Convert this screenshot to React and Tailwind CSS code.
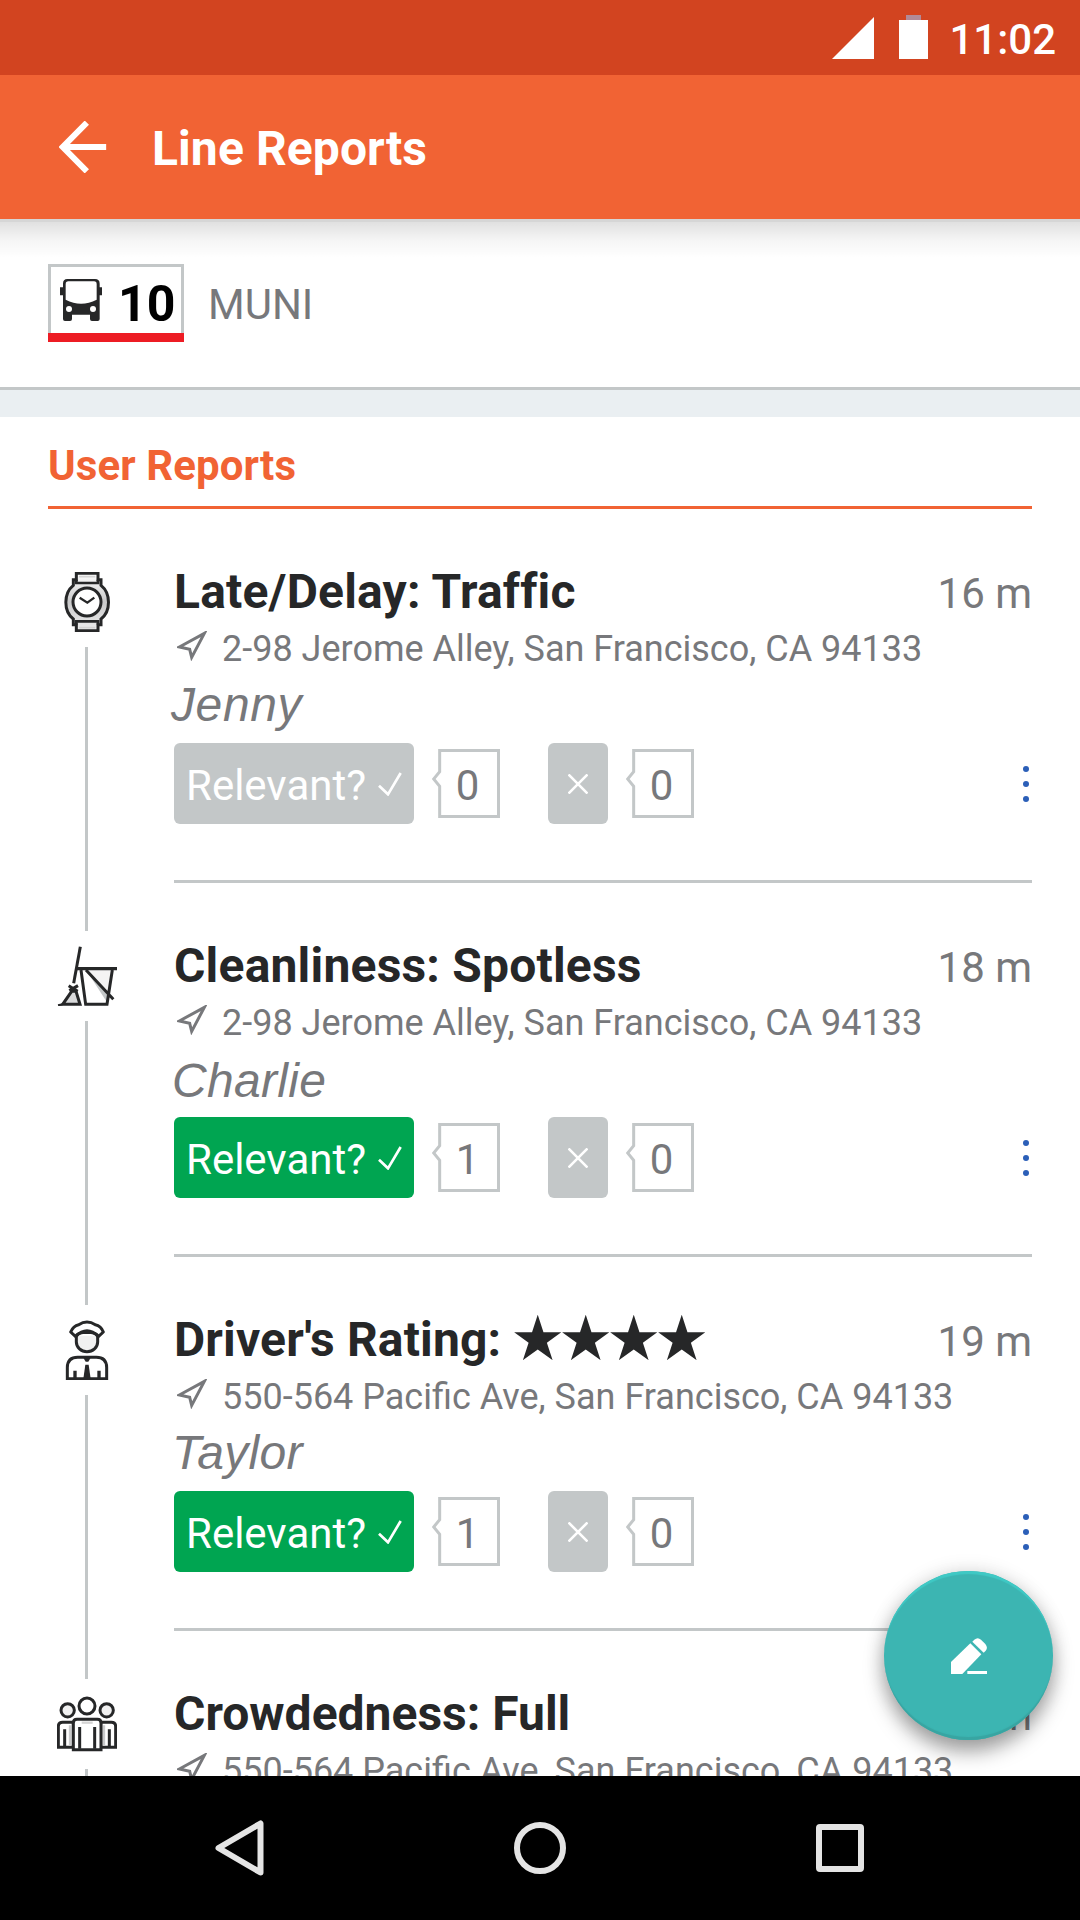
import React from 'react';

const reports = [
  {
    icon: 'watch',
    title: 'Late/Delay: Traffic',
    titleClass: 'tracking-[0.2px]',
    time: '16 m',
    address: '2-98 Jerome Alley, San Francisco, CA 94133',
    user: 'Jenny',
    userClass: '-ml-[3px] tracking-[0.6px]',
    relevant: false,
    up: 0,
    down: 0,
  },
  {
    icon: 'broom',
    title: 'Cleanliness: Spotless',
    titleClass: 'tracking-[0.2px]',
    time: '18 m',
    address: '2-98 Jerome Alley, San Francisco, CA 94133',
    user: 'Charlie',
    userClass: '-ml-0.5 pt-0.5 tracking-[0.3px]',
    relevant: true,
    up: 1,
    down: 0,
  },
  {
    icon: 'driver',
    title: "Driver's Rating:",
    titleClass: 'tracking-[0.15px]',
    stars: '★★★★',
    time: '19 m',
    address: '550-564 Pacific Ave, San Francisco, CA 94133',
    user: 'Taylor',
    userClass: '-ml-0.5 tracking-[0.3px]',
    relevant: true,
    up: 1,
    down: 0,
  },
  {
    icon: 'crowd',
    title: 'Crowdedness: Full',
    titleClass: '',
    time: '21 m',
    address: '550-564 Pacific Ave, San Francisco, CA 94133',
    user: '',
    userClass: '',
    relevant: false,
    up: 0,
    down: 0,
  },
];

const WatchIcon = () => (
  <svg viewBox="81 66 180 180" className="size-[60px]" fill="none" stroke="#262728" strokeWidth="9">
    <defs>
      <linearGradient id="watch" x1="0" y1="0" x2="0" y2="1">
        <stop offset="0" stopColor="#fff" />
        <stop offset="0.5" stopColor="#c9c9ca" />
        <stop offset="1" stopColor="#eee" />
      </linearGradient>
    </defs>
    <path
      d="M139 89V70H204V89H213V106C243 130 243 184 213 207V224H204V242H139V224H130V207C100 184 100 130 130 106V89Z"
      fill="url(#watch)"
    />
    <path d="M139 89V99H204V89M139 224V214H204V224" strokeWidth="8" />
    <path d="M147 80H196M147 233H196" stroke="#d4d4d4" strokeWidth="5" />
    <circle cx="171" cy="156" r="42" fill="#fff" />
    <path d="M149 143L172 158L193 143" strokeWidth="7" />
  </svg>
);

const BroomIcon = () => (
  <svg viewBox="81 78 180 180" className="size-[60px]" fill="none" stroke="#262728" strokeWidth="9">
    <path d="M170 150L245 150L237 228Z" fill="#f4f4f4" stroke="none" />
    <path d="M170 152L237 226L232 248Z" fill="#c3c7c8" stroke="none" />
    <path d="M125 214L98 253H150L138 214Z" fill="#d9dadb" />
    <path d="M151 80L131 190" strokeWidth="9" />
    <path d="M116 197L143 214M144 197L118 212" />
    <path d="M98 253L84 256" strokeWidth="6" />
    <path d="M140 146H261" strokeWidth="10" />
    <path d="M153 150L167 253H231L247 150M168 150L250 238" />
  </svg>
);

const DriverIcon = () => (
  <svg viewBox="81 90 180 180" className="size-[60px]" fill="none" stroke="#262728" strokeWidth="9">
    <path d="M139 137V156A32 29 0 0 0 203 156V137" fill="#f1f1f1" />
    <path
      d="M137 140L122 126Q130 107 146 104Q171 88 196 104Q213 107 220 126L205 140Q171 104 137 140Z"
      fill="#fff"
      strokeLinejoin="round"
    />
    <path d="M138 138Q142 128 171 127Q200 128 204 138" />
    <path d="M112 266V232Q113 202 143 202H199Q229 202 230 232V266Z" fill="#fff" />
    <path d="M160 203H182L175 215H167Z" fill="#262728" stroke="none" />
    <path d="M166 224H176L182 266H160Z" fill="#262728" stroke="none" />
    <path d="M135 242V266M207 242V266" strokeWidth="10" />
  </svg>
);

const CrowdIcon = () => (
  <svg viewBox="81 102 180 180" className="size-[60px]" fill="#fff" stroke="#262728" strokeWidth="9">
    <circle cx="113" cy="151" r="20" fill="#f1f1f1" />
    <circle cx="230" cy="151" r="20" fill="#f1f1f1" />
    <circle cx="171" cy="138" r="24" />
    <path d="M130 187H98Q85 187 85 200V262H130ZM212 187H244Q257 187 257 200V262H212Z" />
    <path d="M120 196V258M222 196V258" stroke="#c9cacb" strokeWidth="7" />
    <path d="M104 208V262M238 208V262" />
    <path d="M130 269V189Q130 178 141 178H202Q213 178 213 189V269Z" />
    <path d="M149 201V266M194 201V266" />
    <path d="M155 188H188" stroke="#d4d4d4" strokeWidth="7" />
  </svg>
);

const BusIcon = () => (
  <svg viewBox="180 216 126 126" className="size-[42px]" fill="#262728">
    <path d="M202 216H285Q299 216 299 230V241H306V265H299V336Q299 342 293 342H276Q270 342 270 336V323H216V336Q216 342 210 342H195Q189 342 189 336V265H180V241H189V230Q189 216 202 216Z" />
    <path d="M205 223H282Q290 223 290 231V278Q243 302 197 278V231Q197 223 205 223Z" fill="#fff" />
    <circle cx="207" cy="306" r="9" fill="#fff" />
    <circle cx="279" cy="306" r="9" fill="#fff" />
  </svg>
);

const icons = {
  watch: WatchIcon,
  broom: BroomIcon,
  driver: DriverIcon,
  crowd: CrowdIcon,
};

const CountBubble = ({ count }) => (
  <div className="relative flex h-[69px] w-[68px] items-center justify-center pt-[5px] pl-[3px] text-[42px] leading-none text-[#77787b]">
    <svg viewBox="96 597 204 207" className="absolute inset-0 size-full" fill="none" stroke="#c3c7c8" strokeWidth="9">
      <path d="M119 601.5H295.5V799.5H119V709L101 687L119 665Z" />
    </svg>
    <span>{count}</span>
  </div>
);

const Report = ({ report }) => {
  const Icon = icons[report.icon];

  return (
    <div className="flex h-[374px] shrink-0 pr-12 pl-[57px]">
      {/* Timeline */}
      <div className="flex w-[60px] shrink-0 flex-col items-center pt-[15px]">
        <Icon />
        <div className="mt-[15px] mr-px w-[3px] flex-1 bg-[#c3c7c8]" />
      </div>

      <div className="ml-[57px] flex-1 pt-[5px]">
        <div className="flex h-[60px] items-center justify-between whitespace-nowrap">
          <h2 className={`flex text-[48px] leading-[60px] font-bold text-[#262728] ${report.titleClass}`}>
            {report.title}
            {report.stars && (
              <span className="-mt-[5px] ml-[11px] font-['Noto_Sans_CJK_JP',sans-serif] text-[51px] font-normal tracking-[-3px]">
                {report.stars}
              </span>
            )}
          </h2>
          <span className="pt-1 text-[42px] leading-[56px] text-[#77787b]">{report.time}</span>
        </div>

        <div className="flex items-center text-[36px] leading-[54px] whitespace-nowrap text-[#77787b]">
          <svg
            viewBox="441 243 90 90"
            className="mr-[15px] ml-[3px] size-[30px] -translate-y-[3px]"
            fill="none"
            stroke="#77787b"
            strokeWidth="9"
          >
            <path d="M448 291L523 250L485 322L479 298Z" />
          </svg>
          <span>{report.address}</span>
        </div>

        <p
          className={`h-[58px] font-['Liberation_Sans',sans-serif] text-[48px] leading-[58px] text-[#77787b] italic ${report.userClass}`}
        >
          {report.user}
        </p>

        <div className="mt-[9px] flex h-[81px] items-center">
          <button
            className={`flex h-full w-[240px] items-center rounded-md pl-3 text-[42px] text-white ${
              report.relevant ? 'bg-[#00a551]' : 'bg-[#c3c7c8]'
            }`}
          >
            <span className="pt-[5px] leading-none">Relevant?</span>
            <svg viewBox="1044 663 72 72" className="ml-3 size-6" fill="none" stroke="#fff" strokeWidth="8">
              <path d="M1047 704L1074 730L1112 666" />
            </svg>
          </button>
          <div className="ml-[18px]">
            <CountBubble count={report.up} />
          </div>
          <button className="ml-12 flex h-full w-[60px] items-center justify-center rounded-md bg-[#c3c7c8]">
            <svg viewBox="0 0 20 20" className="size-5" stroke="#fff" strokeWidth="2.6">
              <path d="M0.5 0.5L19.5 19.5M19.5 0.5L0.5 19.5" />
            </svg>
          </button>
          <div className="ml-[18px]">
            <CountBubble count={report.down} />
          </div>
          <svg viewBox="0 0 6 36" className="mr-[3px] ml-auto h-9 w-1.5" fill="#2b5fb8">
            <circle cx="3" cy="3" r="3" />
            <circle cx="3" cy="18" r="3" />
            <circle cx="3" cy="33" r="3" />
          </svg>
        </div>

        <div className="mt-14 h-[3px] bg-[#c3c7c8]" />
      </div>
    </div>
  );
};

const App = () => {
  return (
    <div className="relative flex h-[1920px] w-[1080px] flex-col overflow-hidden bg-white font-['Roboto',sans-serif]">
      {/* Status Bar */}
      <div className="flex h-[75px] shrink-0 items-start justify-end bg-[#d24420] pr-6 text-white">
        <svg viewBox="0 0 42 42" className="mt-[17px] size-[42px]" fill="#fff">
          <path d="M0 42H42V0Z" />
        </svg>
        <svg viewBox="0 0 29 44" className="mt-[15px] ml-[25px] h-11 w-[29px]">
          <path d="M7 0H22V5H7Z" fill="#b28a97" />
          <path d="M0 5H29V44H0Z" fill="#fff" />
        </svg>
        <span className="ml-[21px] text-[42px] leading-[80px] font-medium">11:02</span>
      </div>

      {/* App Bar */}
      <div className="relative flex h-36 shrink-0 items-center bg-[#f16334] pl-[59px] text-white">
        <svg viewBox="171 363 141 156" className="h-[52px] w-[48px]" fill="none" stroke="#fff" strokeWidth="18">
          <path d="M311 441H182M253 368L181 441L253 514" />
        </svg>
        <h1 className="ml-[45px] pt-1 text-[48px] leading-none font-bold tracking-[0.1px]">Line Reports</h1>
        <div className="absolute top-full left-0 h-[3px] w-full bg-[#d6d6d6]" />
        <div className="absolute top-[147px] left-0 h-9 w-full bg-linear-to-b from-black/12 via-black/4 to-transparent" />
      </div>

      {/* Route */}
      <div className="flex h-[171px] shrink-0 items-start border-b-[3px] border-[#c3c7c8] px-12 pt-[45px]">
        <div className="flex h-[78px] w-[136px] flex-col">
          <div className="flex flex-1 items-center border-[3px] border-b-0 border-[#c3c7c8] pl-[9px]">
            <BusIcon />
            <span className="ml-4 pt-[7px] text-[50px] leading-none font-bold text-black">10</span>
          </div>
          <div className="h-[9px] bg-[#ed1c24]" />
        </div>
        <span className="ml-6 text-[42px] leading-[81px] text-[#77787b]">MUNI</span>
      </div>
      <div className="h-[27px] shrink-0 bg-[#eaeff2]" />

      {/* User Reports */}
      <div className="mx-12 flex h-[92px] shrink-0 items-center border-b-[3px] border-[#f16334] pt-2">
        <h2 className="text-[42px] leading-none font-bold tracking-[0.1px] text-[#f16334]">User Reports</h2>
      </div>
      <div className="flex min-h-0 flex-1 flex-col overflow-hidden pt-12">
        {reports.map((report) => (
          <Report key={report.icon} report={report} />
        ))}
      </div>

      {/* Floating edit button */}
      <button className="absolute top-[1571px] left-[884px] flex size-[169px] items-center justify-center rounded-full bg-[#3cb5b2] shadow-[0_12px_20px_rgba(0,0,0,0.35),0_0_20px_rgba(0,0,0,0.12),inset_0_4px_1px_-1px_#3fc9c5,inset_0_-4px_1px_-1px_#38a5a2]">
        <svg viewBox="633 474 108 108" className="size-9" fill="#fff">
          <path d="M633 546L691 490L724 523L667 582H633Z" />
          <path d="M697 485L703 479Q713 470 723 479L736 492Q745 503 737 512L731 518Z" />
          <path d="M682 573H741V582H682Z" />
        </svg>
      </button>

      {/* Navigation Bar */}
      <div className="z-10 flex h-36 shrink-0 items-center bg-black pl-[215px]">
        <svg viewBox="0 0 49 56" className="h-14 w-[49px]" fill="none" stroke="#e4e4e4" strokeWidth="6" strokeLinejoin="round">
          <path d="M3.5 28L45.5 3.5V52.5Z" />
        </svg>
        <div className="ml-[250px] size-[52px] rounded-full border-[6px] border-[#e4e4e4]" />
        <div className="ml-[250px] size-12 rounded-[4px] border-[6px] border-[#e4e4e4]" />
      </div>
    </div>
  );
};

export default App;
